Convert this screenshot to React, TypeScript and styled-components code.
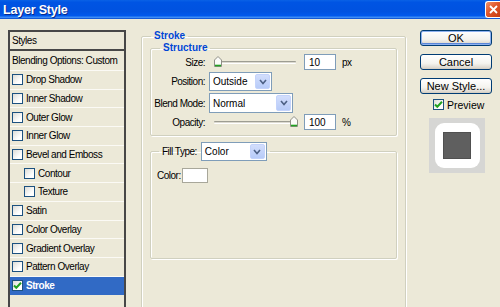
import React from "react";
import styled, { createGlobalStyle } from "styled-components";

const GlobalStyle = createGlobalStyle`
  html, body { margin: 0; padding: 0; background: #ece9d8; }
  body {
    font-family: "Liberation Sans", Arial, sans-serif;
    font-size: 10px;
    color: #000;
  }
  * { box-sizing: border-box; }
`;

const Window = styled.div`
  width: 500px;
  height: 307px;
  overflow: hidden;
  background: #ece9d8;
  display: flex;
  flex-direction: column;
`;

const TitleBar = styled.div`
  height: 19px;
  flex: none;
  display: flex;
  align-items: center;
  justify-content: space-between;
  padding-left: 3px;
  background: linear-gradient(180deg, #0a62e6 0%, #0054e3 12%, #0052e0 60%, #0058ec 82%, #3d8cf6 92%, #0042c8 100%);
`;

const Title = styled.div`
  color: #fff;
  font-weight: bold;
  font-size: 12.5px;
  letter-spacing: -0.2px;
  text-shadow: 1px 1px 0 #0a2a8a;
`;

const CloseBtn = styled.div`
  width: 15px;
  height: 17px;
  margin-top: -1px;
  border: 1px solid #fff;
  border-right: none;
  border-radius: 3px 0 0 3px;
  background: linear-gradient(135deg, #f0936b 0%, #e1572b 45%, #c63c12 100%);
  display: flex;
  align-items: center;
  justify-content: center;
`;

const Body = styled.div`
  flex: 1;
  display: flex;
  min-height: 0;
`;

const StyleList = styled.div`
  margin: 11px 0 0 8px;
  width: 118px;
  border: 2px solid #474747;
  border-bottom: none;
  display: flex;
  flex-direction: column;
  letter-spacing: -0.45px;
`;

const HeaderRow = styled.div<{ $dark?: boolean }>`
  height: ${p => (p.$dark ? 19 : 20)}px;
  flex: none;
  display: flex;
  align-items: center;
  padding-left: 2px;
  border-bottom: ${p => (p.$dark ? "2px solid #474747" : "1px solid #fbfaf5")};
`;

const ItemRow = styled.div<{ $indent?: boolean; $selected?: boolean }>`
  height: 18.7px;
  flex: none;
  display: flex;
  align-items: center;
  padding-left: ${p => (p.$indent ? 14 : 2)}px;
  border-bottom: 1px solid ${p => (p.$selected ? "#316ac5" : "#fbfaf5")};
  background: ${p => (p.$selected ? "#316ac5" : "transparent")};
  color: ${p => (p.$selected ? "#fff" : "#000")};
  font-weight: ${p => (p.$selected ? "bold" : "normal")};
`;

const Box = styled.span`
  width: 11px;
  height: 11px;
  flex: none;
  border: 1px solid #1c5180;
  background: linear-gradient(135deg, #dcdcd7 0%, #fff 70%);
  margin-right: 3px;
  display: inline-flex;
  align-items: center;
  justify-content: center;
`;

const Middle = styled.div`
  margin: 11px 0 0 15px;
  width: 265px;
  letter-spacing: -0.5px;
`;

const Group = styled.fieldset<{ $h: number; $pad?: number }>`
  margin: 0;
  height: ${p => p.$h}px;
  padding: 0 ${p => p.$pad ?? 8}px;
  border: 1px solid #d0d0bf;
  border-radius: 2px;
  box-shadow: 1px 1px 0 #fff, inset 1px 1px 0 #fff;
  min-width: 0;
`;

const Legend = styled.legend`
  margin-left: 1px;
  padding: 0 3px;
  color: #0046d5;
  font-weight: bold;
  font-size: 10px;
  line-height: 12px;
  letter-spacing: 0;
`;

const FillLegend = styled.legend`
  padding: 0 3px;
  display: flex;
  align-items: center;
  gap: 4px;
`;

const Rows = styled.div`
  display: flex;
  flex-direction: column;
`;

const Row = styled.div<{ $h: number; $mt?: number }>`
  height: ${p => p.$h}px;
  margin-top: ${p => p.$mt ?? 0}px;
  display: flex;
  align-items: center;
`;

const Label = styled.span`
  width: 55px;
  text-align: right;
  padding-right: 1px;
  margin-right: 3px;
  flex: none;
`;

const Track = styled.div`
  width: 90px;
  height: 100%;
  position: relative;
  display: flex;
  align-items: center;
  padding: 0 3px 0 5px;
`;

const Line = styled.div`
  flex: 1;
  height: 3px;
  border-top: 1px solid #9d9d92;
  border-bottom: 1px solid #fff;
  background: #dcdad0;
  border-radius: 1px;
`;

const Thumb = styled.svg`
  position: absolute;
  top: 2px;
`;

const NumBox = styled.div`
  width: 32px;
  height: 16px;
  margin-left: 5px;
  border: 1px solid #7f9db9;
  background: #fff;
  padding-left: 4px;
  display: flex;
  align-items: center;
  letter-spacing: 0;
`;

const Unit = styled.span`
  margin-left: 6px;
`;

const Combo = styled.div<{ $w: number; $h: number }>`
  width: ${p => p.$w}px;
  height: ${p => p.$h}px;
  border: 1px solid #7f9db9;
  background: #fff;
  display: flex;
  align-items: stretch;
  letter-spacing: 0;
`;

const ComboValue = styled.span`
  flex: 1;
  padding-left: 3px;
  display: flex;
  align-items: center;
`;

const DropBtn = styled.span`
  width: 15px;
  margin: 1px;
  border-radius: 2px;
  background: linear-gradient(180deg, #d3defc 0%, #b7cbf8 100%);
  border: 1px solid #c4d3fb;
  display: flex;
  align-items: center;
  justify-content: center;
`;

const Swatch = styled.div`
  width: 26px;
  height: 15px;
  border: 1px solid #a8a79a;
  background: #fff;
  margin-left: 1px;
`;

const ColorRow = styled.div`
  display: flex;
  align-items: center;
  margin: 7px 0 0 -2px;
`;

const Right = styled.div`
  margin: 11px 0 0 14px;
  width: 72px;
  display: flex;
  flex-direction: column;
`;

const Button = styled.div<{ $default?: boolean }>`
  height: 16px;
  margin-bottom: 8px;
  border: 1px solid #003c74;
  border-radius: 3px;
  background: linear-gradient(180deg, #fff 0%, #f4f3ee 60%, #d6d0c5 100%);
  box-shadow: ${p => (p.$default ? "inset 0 0 0 1px #8eb2f0, inset 0 -1px 0 1px #5a86d8" : "inset 0 -1px 0 #d6d0c5")};
  font-size: 11px;
  display: flex;
  align-items: center;
  justify-content: center;
`;

const PreviewCheck = styled.div`
  display: flex;
  align-items: center;
  margin: -3px 0 0 13px;
  height: 11px;
  font-size: 10.5px;
`;

const PreviewBox = styled.div`
  margin: 8px 0 0 9px;
  width: 56px;
  height: 55px;
  background: #d6d6d4;
  display: flex;
  align-items: center;
  justify-content: center;
`;

const PreviewTile = styled.div`
  width: 45px;
  height: 45px;
  border-radius: 9px;
  background: #fff;
  display: flex;
  align-items: center;
  justify-content: center;
`;

const PreviewSquare = styled.div`
  width: 28px;
  height: 27px;
  background: #5f5f5f;
  border: 1px solid #505050;
`;

const Check = () => (
  <svg width="9" height="9" viewBox="0 0 9 9">
    <path d="M1 4.5 L3.3 6.8 L8 1.8" stroke="#21a121" strokeWidth="2" fill="none" />
  </svg>
);

const Chevron = () => (
  <svg width="8" height="6" viewBox="0 0 8 6">
    <path d="M1 1 L4 4.5 L7 1" stroke="#4d6185" strokeWidth="1.6" fill="none" />
  </svg>
);

const Slider = ({ pos }: { pos: number }) => (
  <Track>
    <Line />
    <Thumb width="8" height="11" viewBox="0 0 8 11" style={{ left: pos }}>
      <path d="M0.5 4 L4 0.5 L7.5 4 L7.5 10.5 L0.5 10.5 Z" fill="#fbfbf8" stroke="#8f8f86" />
      <path d="M1 9.5 L7 9.5" stroke="#21a121" strokeWidth="1.6" />
    </Thumb>
  </Track>
);

const Select = ({ value, w, h }: { value: string; w: number; h: number }) => (
  <Combo $w={w} $h={h}>
    <ComboValue>{value}</ComboValue>
    <DropBtn><Chevron /></DropBtn>
  </Combo>
);

const items: Array<{ name: string; indent?: boolean; selected?: boolean }> = [
  { name: "Drop Shadow" },
  { name: "Inner Shadow" },
  { name: "Outer Glow" },
  { name: "Inner Glow" },
  { name: "Bevel and Emboss" },
  { name: "Contour", indent: true },
  { name: "Texture", indent: true },
  { name: "Satin" },
  { name: "Color Overlay" },
  { name: "Gradient Overlay" },
  { name: "Pattern Overlay" },
  { name: "Stroke", selected: true },
];

export default function App() {
  return (
    <Window>
      <GlobalStyle />
      <TitleBar>
        <Title>Layer Style</Title>
        <CloseBtn>
          <svg width="9" height="9" viewBox="0 0 9 9">
            <path d="M1 1 L8 8 M8 1 L1 8" stroke="#fff" strokeWidth="1.8" />
          </svg>
        </CloseBtn>
      </TitleBar>
      <Body>
        <StyleList>
          <HeaderRow $dark>Styles</HeaderRow>
          <HeaderRow>Blending Options: Custom</HeaderRow>
          {items.map(item => (
            <ItemRow key={item.name} $indent={item.indent} $selected={item.selected}>
              <Box>{item.selected && <Check />}</Box>
              {item.name}
            </ItemRow>
          ))}
        </StyleList>

        <Middle>
          <Group $h={300}>
            <Legend>Stroke</Legend>
            <Group $h={94} $pad={0}>
              <Legend style={{ marginLeft: 9 }}>Structure</Legend>
              <Rows>
                <Row $h={16}>
                  <Label>Size:</Label>
                  <Slider pos={5} />
                  <NumBox>10</NumBox>
                  <Unit>px</Unit>
                </Row>
                <Row $h={19} $mt={2}>
                  <Label>Position:</Label>
                  <Select value="Outside" w={63} h={19} />
                </Row>
                <Row $h={20} $mt={2}>
                  <Label>Blend Mode:</Label>
                  <Select value="Normal" w={84} h={20} />
                </Row>
                <Row $h={16} $mt={1}>
                  <Label>Opacity:</Label>
                  <Slider pos={81} />
                  <NumBox>100</NumBox>
                  <Unit>%</Unit>
                </Row>
              </Rows>
            </Group>
            <Group $h={117} style={{ marginTop: 6 }}>
              <FillLegend>
                <span>Fill Type:</span>
                <Select value="Color" w={66} h={19} />
              </FillLegend>
              <ColorRow>
                <span>Color:</span>
                <Swatch />
              </ColorRow>
            </Group>
          </Group>
        </Middle>

        <Right>
          <Button $default>OK</Button>
          <Button>Cancel</Button>
          <Button>New Style...</Button>
          <PreviewCheck>
            <Box><Check /></Box>
            Preview
          </PreviewCheck>
          <PreviewBox>
            <PreviewTile>
              <PreviewSquare />
            </PreviewTile>
          </PreviewBox>
        </Right>
      </Body>
    </Window>
  );
}
